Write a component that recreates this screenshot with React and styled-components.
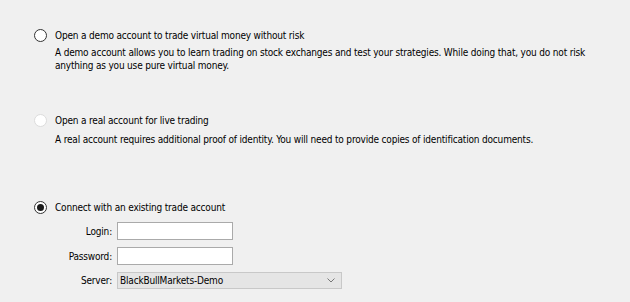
import React from "react";
import styled, { createGlobalStyle } from "styled-components";

const Global = createGlobalStyle`
  html, body { margin: 0; padding: 0; background: #f0f0f0; }
  body { font-family: Tahoma, "DejaVu Sans Condensed", "Liberation Sans", Arial, sans-serif; font-size: 10px; letter-spacing: -0.18px; color: #000; }
`;

const Page = styled.div`
  width: 630px;
  height: 302px;
  box-sizing: border-box;
  padding: 28px 0 0 34px;
  overflow: hidden;
  background: #f0f0f0;
`;

const Option = styled.div`
  display: grid;
  grid-template-columns: 13px 1fr;
  column-gap: 8px;
  margin-top: ${(p) => p.$top || 0}px;
`;

const Radio = styled.span`
  width: 13px;
  height: 13px;
  box-sizing: border-box;
  border-radius: 50%;
  margin-top: 1px;
  background: #fff;
  border: 1px solid ${(p) => (p.$disabled ? "#dcdcdc" : "#333")};
  display: flex;
  align-items: center;
  justify-content: center;
  &::after {
    content: "";
    display: ${(p) => (p.$checked ? "block" : "none")};
    width: 7px;
    height: 7px;
    border-radius: 50%;
    background: #1a1a1a;
  }
`;

const Body = styled.div`
  display: flex;
  flex-direction: column;
`;

const Title = styled.div`
  line-height: 16px;
  height: 16px;
  white-space: nowrap;
`;

const Desc = styled.div`
  margin-top: ${(p) => p.$gap}px;
  line-height: 13px;
  max-width: 545px;
`;

const Form = styled.div`
  display: grid;
  grid-template-columns: 57px auto;
  column-gap: 5px;
  row-gap: 7px;
  margin-top: 6px;
  justify-content: start;
  align-items: center;
`;

const Label = styled.label`
  text-align: right;
  white-space: nowrap;
`;

const Input = styled.input`
  box-sizing: border-box;
  width: 116px;
  height: 18px;
  margin: 0;
  border: 1px solid #aaa;
  background: #fff;
  outline: none;
  padding: 0 3px;
  font: inherit;
`;

const Select = styled.div`
  box-sizing: border-box;
  width: 225px;
  height: 17px;
  border: 1px solid #c8c8c8;
  background: #e5e5e5;
  display: flex;
  align-items: center;
  justify-content: space-between;
  padding: 0 6px 0 2px;
  line-height: 15px;
`;

const Chevron = () => (
  <svg width="8" height="5" viewBox="0 0 8 5">
    <path d="M0.5 0.5 L4 4 L7.5 0.5" fill="none" stroke="#777" strokeWidth="1" />
  </svg>
);

export default function App() {
  return (
    <Page>
      <Global />
      <Option>
        <Radio />
        <Body>
          <Title>Open a demo account to trade virtual money without risk</Title>
          <Desc $gap={2}>
            A demo account allows you to learn trading on stock exchanges and test your strategies. While doing that, you do not risk anything as you use pure virtual money.
          </Desc>
        </Body>
      </Option>
      <Option $top={41}>
        <Radio $disabled />
        <Body>
          <Title>Open a real account for live trading</Title>
          <Desc $gap={4}>
            A real account requires additional proof of identity. You will need to provide copies of identification documents.
          </Desc>
        </Body>
      </Option>
      <Option $top={54}>
        <Radio $checked />
        <Body>
          <Title>Connect with an existing trade account</Title>
          <Form>
            <Label>Login:</Label>
            <Input type="text" />
            <Label>Password:</Label>
            <Input type="password" />
            <Label>Server:</Label>
            <Select>
              <span>BlackBullMarkets-Demo</span>
              <Chevron />
            </Select>
          </Form>
        </Body>
      </Option>
    </Page>
  );
}
